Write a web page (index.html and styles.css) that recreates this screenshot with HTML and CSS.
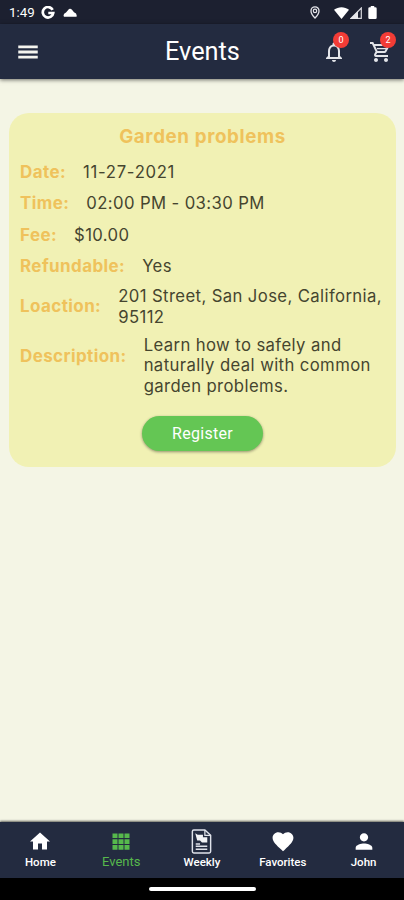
FILE: index.html
```html
<!DOCTYPE html>
<html lang="en">
<head>
   <meta charset="UTF-8">
   <meta name="viewport" content="width=device-width, initial-scale=1.0">
   <title>Events</title>
   <link rel="stylesheet" href="styles.css">
</head>
<body>
   <div class="status-bar">
      <span class="clock">1:49</span>
      <svg class="google" viewBox="0 0 24 24" width="14" height="14"><path d="M20 6.5A9 9 0 1 0 21 12H12.5" fill="none" stroke="#fff" stroke-width="4.6"/></svg>
      <svg class="cloud" viewBox="0 0 14 9" width="14" height="9"><path d="M1 8.8Q-.5 6.2 3 4.6L6 1Q7.5 0 9 1.8L11 4.2Q14.5 5.4 13.5 8.8Z" fill="#fff"/></svg>
      <svg class="place" viewBox="0 0 10 13" width="10" height="13"><path d="M5 .8C2.6.8 1 2.6 1 4.9 1 7.8 5 12 5 12s4-4.2 4-7.1C9 2.6 7.4.8 5 .8Z" fill="none" stroke="#e4e4ea" stroke-width="1.3"/><circle cx="5" cy="4.9" r="1.7" fill="none" stroke="#e4e4ea" stroke-width="1.2"/></svg>
      <svg class="wifi" viewBox="0 0 15 12" width="15" height="12"><path d="M0 2.8C4.3-.7 10.7-.7 15 2.8L7.5 12Z" fill="#fff"/></svg>
      <svg class="signal" viewBox="0 0 12 12" width="12" height="12"><path d="M11.3 1V11.3H1Z" fill="none" stroke="#d8d8de" stroke-width="1.2"/><path d="M8 4V12H0Z" fill="#e6e6ea"/></svg>
      <svg class="battery" viewBox="0 0 9 14" width="9" height="13"><path d="M2.6 0H6.4V1.4H7.6Q9 1.4 9 2.8V12.6Q9 14 7.6 14H1.4Q0 14 0 12.6V2.8Q0 1.4 1.4 1.4H2.6Z" fill="#fff"/></svg>
   </div>

   <header class="app-bar">
      <svg class="menu" viewBox="0 0 24 24" width="26" height="26"><path d="M3 18h18v-2.6H3zm0-4.7h18v-2.6H3zM3 6v2.6h18V6z" fill="#f4f4ee"/></svg>
      <h1>Events</h1>
      <div class="action">
         <svg viewBox="0 0 24 24" width="24" height="24"><path d="M12 22c1.1 0 2-.9 2-2h-4c0 1.1.9 2 2 2zm6-6v-5c0-3.07-1.63-5.64-4.5-6.32V4c0-.83-.67-1.5-1.5-1.5s-1.5.67-1.5 1.5v.68C7.64 5.36 6 7.92 6 11v5l-2 2v1h16v-1l-2-2zm-2 1H8v-6c0-2.48 1.51-4.5 4-4.5s4 2.02 4 4.5v6z" fill="#e3e5e9"/></svg>
         <span class="badge">0</span>
      </div>
      <div class="action cart">
         <svg viewBox="0 0 24 24" width="24" height="24"><path d="M15.55 13c.75 0 1.41-.41 1.75-1.03l3.58-6.49A.996.996 0 0 0 20.01 4H5.21l-.94-2H1v2h2l3.6 7.59-1.35 2.44C4.52 15.37 5.48 17 7 17h12v-2H7l1.1-2h7.45zM6.16 6h12.15l-2.76 5H8.53L6.16 6zM7 18c-1.1 0-1.99.9-1.99 2S5.9 22 7 22s2-.9 2-2-.9-2-2-2zm10 0c-1.1 0-1.99.9-1.99 2s.89 2 1.99 2 2-.9 2-2-.9-2-2-2z" fill="#e3e5e9"/><path d="M8 8.6h9" stroke="#e3e5e9" stroke-width="1.3"/></svg>
         <span class="badge">2</span>
      </div>
   </header>

   <main>
      <section class="card">
         <h2>Garden problems</h2>
         <dl>
            <div class="row"><dt>Date:</dt><dd class="date">11-27-2021</dd></div>
            <div class="row"><dt>Time:</dt><dd>02:00 PM - 03:30 PM</dd></div>
            <div class="row"><dt>Fee:</dt><dd>$10.00</dd></div>
            <div class="row"><dt>Refundable:</dt><dd>Yes</dd></div>
            <div class="row location"><dt>Loaction:</dt><dd>201 Street, San Jose, California,<br>95112</dd></div>
            <div class="row description"><dt>Description:</dt><dd>Learn how to safely and<br>naturally deal with common<br>garden problems.</dd></div>
         </dl>
         <button class="register-btn">Register</button>
      </section>
   </main>

   <nav class="tabs">
      <a class="tab">
         <svg viewBox="0 0 24 24" width="24" height="24"><path d="M10 20v-6h4v6h5v-8h3L12 3 2 12h3v8z" fill="#fff"/></svg>
         <span>Home</span>
      </a>
      <a class="tab active">
         <svg viewBox="0 0 24 24" width="24" height="24"><path d="M3.5 4h5v4.6h-5zm6 0h5v4.6h-5zm6 0h5v4.6h-5zm-12 5.8h5v4.6h-5zm6 0h5v4.6h-5zm6 0h5v4.6h-5zm-12 5.8h5v4.6h-5zm6 0h5v4.6h-5zm6 0h5v4.6h-5z" fill="#56b84c"/></svg>
         <span>Events</span>
      </a>
      <a class="tab">
         <svg class="news" viewBox="0 0 21 26" width="21" height="26"><path d="M2.5 1H14L20 6.5V23.5Q20 25 18.5 25H2.5Q1 25 1 23.5V2.5Q1 1 2.5 1Z" fill="none" stroke="#dfe2ea" stroke-width="1.5"/><path d="M14 1V6.5H20" fill="none" stroke="#dfe2ea" stroke-width="1.3"/><path d="M4 4.5L6.5 6H12V8.5H16.5V14H11L9 12H6Z" fill="#f2f3f6"/><path d="M4.5 15.5H9M4.5 18H16.5M4.5 21H16.5" stroke="#dfe2ea" stroke-width="1.6"/></svg>
         <span>Weekly</span>
      </a>
      <a class="tab">
         <svg viewBox="0 0 24 24" width="26" height="26"><path d="M12 21.35l-1.45-1.32C5.4 15.36 2 12.28 2 8.5 2 5.42 4.42 3 7.5 3c1.74 0 3.41.81 4.5 2.09C13.09 3.81 14.76 3 16.5 3 19.58 3 22 5.42 22 8.5c0 3.78-3.4 6.86-8.55 11.54L12 21.35z" fill="#fff"/></svg>
         <span>Favorites</span>
      </a>
      <a class="tab">
         <svg viewBox="0 0 24 24" width="26" height="26"><path d="M12 12c2.21 0 4-1.79 4-4s-1.79-4-4-4-4 1.79-4 4 1.79 4 4 4zm0 2c-2.67 0-8 1.34-8 4v2h16v-2c0-2.66-5.33-4-8-4z" fill="#fff"/></svg>
         <span>John</span>
      </a>
   </nav>
   <footer class="home-bar"><span class="handle"></span></footer>
</body>
</html>
```
FILE: styles.css
```css
:root {
   --navy: #232b40;
   --status-bg: #1c2030;
   --page-bg: #f4f5e5;
   --card-bg: #f1f1b4;
   --label: #efc25c;
   --green: #64c654;
   --red: #f23c36;
}
* {
   box-sizing: border-box;
}
body {
   margin: 0;
   height: 900px;
   display: flex;
   flex-direction: column;
   background: var(--page-bg);
   font-family: Roboto, sans-serif;
   overflow: hidden;
}
svg {
   display: block;
   flex: none;
}
.status-bar {
   height: 24px;
   display: flex;
   align-items: center;
   padding: 1px 26px 0 9px;
   background: var(--status-bg);
   color: #fff;
}
.clock {
   width: 32px;
   font-size: 13.3px;
   font-weight: 400;
   line-height: 24px;
}
.cloud {
   margin-left: 8px;
}
.place {
   margin-left: auto;
}
.wifi {
   margin-left: 14px;
}
.signal {
   margin-left: 1px;
}
.battery {
   margin-left: 6px;
   margin-right: 1px;
}
.app-bar {
   height: 55px;
   display: flex;
   align-items: center;
   padding: 0 11px 0 15px;
   background: var(--navy);
   box-shadow: 0 1px 4px rgba(0, 0, 0, 0.55);
}
h1 {
   flex: 1;
   margin: 0 0 0 124px;
   color: #fff;
   font-size: 25.3px;
   font-weight: 400;
   line-height: 56px;
}
.action {
   position: relative;
}
.cart {
   margin-left: 23px;
}
.badge {
   position: absolute;
   top: -8px;
   left: 11px;
   width: 16px;
   height: 16px;
   border-radius: 50%;
   background: var(--red);
   color: #fff;
   font-size: 9px;
   line-height: 16px;
   text-align: center;
}
main {
   flex: 1;
   padding: 34px 8px 0 9px;
}
.card {
   height: 354px;
   padding: 12px 11px 0;
   border-radius: 20px;
   background: var(--card-bg);
   font-family: Inter, sans-serif;
   text-align: center;
}
h2 {
   margin: 0;
   color: var(--label);
   font-size: 18.8px;
   font-weight: 700;
   line-height: 23px;
   letter-spacing: 0.6px;
}
dl {
   margin: 14px 0 0;
   display: flex;
   flex-direction: column;
   gap: 10.8px;
   text-align: left;
}
.row {
   display: flex;
   align-items: center;
   gap: 17px;
   font-size: 16.7px;
   line-height: 20.5px;
   letter-spacing: 0.39px;
   white-space: nowrap;
}
dt {
   color: var(--label);
   font-size: 17px;
   font-weight: 700;
   letter-spacing: 0.4px;
}
dd {
   margin: 0;
   color: #45452f;
   font-weight: 400;
}
.date {
   letter-spacing: 0.7px;
}
.location {
   margin-top: -1px;
}
.description {
   align-items: flex-start;
   margin-top: -3px;
}
.description dt {
   padding-top: 11px;
}
.register-btn {
   width: 121px;
   height: 35px;
   margin-top: 20px;
   padding: 0;
   border: none;
   border-radius: 18px;
   background: var(--green);
   box-shadow: 0 1px 3px rgba(0, 0, 0, 0.4);
   color: #fff;
   font-family: Roboto, sans-serif;
   font-size: 16px;
   letter-spacing: 0.3px;
}
.tabs {
   height: 56px;
   display: flex;
   padding-top: 7px;
   background: var(--navy);
   box-shadow: 0 -1px 2px rgba(0, 0, 0, 0.6);
}
.tab {
   flex: 1;
   display: flex;
   flex-direction: column;
   align-items: center;
   color: #fff;
   font-size: 11.5px;
   font-weight: 500;
}
.tab svg {
   height: 25px;
}
.tab span {
   line-height: 17px;
}
.tab.active {
   color: #56b84c;
   font-size: 13px;
   font-weight: 400;
}
.tab.active span {
   line-height: 15px;
}
.home-bar {
   height: 22px;
   display: flex;
   align-items: center;
   justify-content: center;
   background: #000;
}
.handle {
   width: 107px;
   height: 4px;
   border-radius: 2px;
   background: #fff;
}
```
